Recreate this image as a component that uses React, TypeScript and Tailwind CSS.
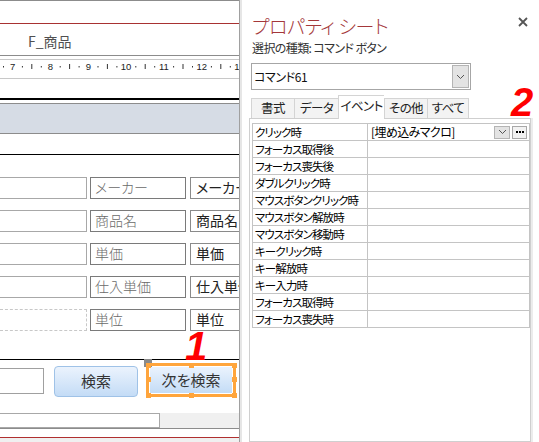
import React from 'react'

const JP = "font-['Noto_Sans_CJK_JP',sans-serif] [font-feature-settings:'palt']"

const ROWS = [
  { label: 'メーカー', dashed: false },
  { label: '商品名', dashed: false },
  { label: '単価', dashed: false },
  { label: '仕入単価', dashed: false },
  { label: '単位', dashed: true },
]

const EVENTS = [
  'クリック時',
  'フォーカス取得後',
  'フォーカス喪失後',
  'ダブルクリック時',
  'マウスボタンクリック時',
  'マウスボタン解放時',
  'マウスボタン移動時',
  'キークリック時',
  'キー解放時',
  'キー入力時',
  'フォーカス取得時',
  'フォーカス喪失時',
]

const TABS = [
  { name: '書式', w: 'w-[43px]' },
  { name: 'データ', w: 'w-[44px]' },
  { name: 'イベント', w: 'w-[46px]', active: true },
  { name: 'その他', w: 'w-[43px]' },
  { name: 'すべて', w: 'w-[42px]' },
]

function Ruler() {
  const units = [6, 7, 8, 9, 10, 11, 12, 13]
  return (
    <svg width="239" height="18" className="block">
      {units.map((n) => {
        const x = 12.7 + (n - 7) * 37.8
        return (
          <g key={n}>
            <text x={x} y="9.5" fontSize="9.5" textAnchor="middle" fill="#222" fontFamily="Liberation Sans, sans-serif">
              {n}
            </text>
            <rect x={x + 9.2} y="6" width="1" height="1.5" fill="#333" />
            <rect x={x + 18.6} y="4" width="1" height="5" fill="#333" />
            <rect x={x + 28.1} y="6" width="1" height="1.5" fill="#333" />
          </g>
        )
      })}
    </svg>
  )
}

function Handle({ className }: { className: string }) {
  return <span className={`absolute h-[5px] w-[5px] bg-[#ffa53c] ${className}`} />
}

function Chevron() {
  return (
    <svg width="9" height="6" viewBox="0 0 9 6">
      <path d="M1 1 L4.5 4.5 L8 1" fill="none" stroke="#555" strokeWidth="1" />
    </svg>
  )
}

function DesignArea() {
  return (
    <div className={`relative flex h-full w-[240px] shrink-0 flex-col overflow-hidden border-r border-[#a0a0a0] bg-white ${JP}`}>
      <div className="h-px bg-[#8c8c8c]" />
      <div className="h-[22px]" />
      <div className="h-px bg-[#a83232]" />
      <div className="h-[31px] pl-[28px] pt-[9px] text-[14px] leading-[16px] text-[#505050]">F_商品</div>
      <div className="h-px bg-[#8c8c8c]" />
      <div className="h-[3px]" />
      <div className="h-[20px] border-y border-[#c8c8c8]">
        <Ruler />
      </div>
      <div className="h-[19px]" />
      <div className="h-[2px] bg-black" />
      <div className="h-[3px]" />
      <div className="h-[31px] border-y border-[#8c8c8c] bg-[#d6dce5]" />
      <div className="h-[20px]" />
      <div className="h-px bg-black" />
      <div className="flex flex-col gap-[11px] pt-[22px]">
        {ROWS.map((r) => (
          <div key={r.label} className="flex h-[22px]">
            <div
              className={`w-[87px] shrink-0 border border-l-0 ${r.dashed ? 'border-dashed border-[#c8c8c8]' : 'border-[#a8a8a8]'}`}
            />
            <div className="ml-[3px] w-[96px] shrink-0 border border-[#7a7a7a] pl-[4px] text-[14px] font-light leading-[18px] text-[#6a6a6a]">
              {r.label}
            </div>
            <div className="ml-[4px] w-[70px] shrink-0 whitespace-nowrap border border-[#8a8a8a] pl-[5px] text-[14px] leading-[18px] text-[#222]">
              {r.label}
            </div>
          </div>
        ))}
      </div>
      <div className="h-[28px]" />
      <div className="h-px bg-black" />
      <div className="relative flex h-[53px] items-start">
        <span className="absolute left-[144px] top-[-1px] h-[8px] w-[8px] bg-[#8a8a8a]" />
        <div className="mt-[8px] h-[26px] w-[44px] shrink-0 border border-l-0 border-[#a0a0a0]" />
        <div className="ml-[10px] mt-[6px] flex h-[31px] w-[84px] shrink-0 items-center justify-center rounded-[4px] border border-[#9fc2e7] bg-gradient-to-b from-[#ebf3fd] to-[#c4dcf6] text-[15px] text-[#333]">
          検索
        </div>
        <div className="relative ml-[8px] mt-[3px] h-[34px] w-[90px] shrink-0 border-[3px] border-[#ffa53c] p-px">
          <div className="flex h-full w-full items-center justify-center bg-gradient-to-b from-[#ebf3fd] to-[#c4dcf6] text-[15px] text-[#333]">
            次を検索
          </div>
          <Handle className="left-[-3px] top-[-3px]" />
          <Handle className="left-[40px] top-[-3px]" />
          <Handle className="right-[-4px] top-[-3px]" />
          <Handle className="left-[-3px] top-[11px]" />
          <Handle className="right-[-4px] top-[11px]" />
          <Handle className="bottom-[-4px] left-[-3px]" />
          <Handle className="bottom-[-4px] left-[40px]" />
          <Handle className="bottom-[-4px] right-[-4px]" />
        </div>
      </div>
      <div className="flex h-[15px] bg-[#f0f0f0]">
        <div className="w-[160px] border border-l-0 border-[#a8a8a8] bg-white" />
      </div>
      <div className="h-px bg-[#8c8c8c]" />
      <div className="h-[8px]" />
      <div className="h-px bg-[#b03030]" />
      <div className="flex-1 bg-[#f0f0f0]" />
      <span className="absolute left-[185px] top-[326px] font-['Liberation_Sans',sans-serif] text-[40px] font-black italic leading-none text-[#ff0000]">
        1
      </span>
    </div>
  )
}

function PropertySheet() {
  return (
    <div className={`relative flex h-full flex-1 flex-col bg-white pl-[2px] ${JP}`}>
      <div className="mt-[13px] flex h-[26px] items-start">
        <span className="pl-[1px] text-[19px] font-light leading-[26px] tracking-[-0.4px] text-[#a4373a]">
          プロパティ シート
        </span>
        <svg width="10" height="10" viewBox="0 0 10 10" className="ml-auto mr-[11px] mt-[4px]">
          <path d="M1 1 L9 9 M9 1 L1 9" stroke="#555" strokeWidth="1.8" />
        </svg>
      </div>
      <div className="mt-[1px] whitespace-nowrap pl-[1px] text-[12px] leading-[16px] tracking-[-0.6px] text-[#333]">
        選択の種類: コマンド ボタン
      </div>
      <div className="mt-[7px] flex h-[27px] w-[220px] items-center border border-[#a6a6a6] pl-[2px] text-[12px] tracking-[-0.4px] text-[#111]">
        <span>コマンド61</span>
        <div className="ml-auto mr-[1px] flex h-[23px] w-[17px] items-center justify-center border border-[#b4b4b4] bg-[#e3e3e3]">
          <Chevron />
        </div>
      </div>
      <div className="relative z-10 mt-[5px] flex h-[23px] items-end">
        {TABS.map((t, i) => (
          <div
            key={t.name}
            className={`${t.w} flex shrink-0 items-center justify-center whitespace-nowrap border-t border-l border-[#d4d4d4] text-[12.5px] tracking-[-0.6px] text-[#222] ${
              t.active ? '-mb-px h-[24px] bg-white pb-[2px]' : 'h-[20px] bg-[#f3f3f3]'
            } ${i === TABS.length - 1 ? 'border-r' : ''}`}
          >
            {t.name}
          </div>
        ))}
      </div>
      <div className="-ml-[2px] flex flex-1">
        <div className="w-[282px] border border-[#cfcfcf] pl-[2px] pt-[4px]">
          <div className="w-[278px] border border-b-0 border-[#c4c4c4]">
            {EVENTS.map((e, i) => (
              <div key={e} className="flex h-[17px] border-b border-[#c4c4c4] text-[11.5px] leading-[16px] tracking-[-0.9px] text-black">
                <div className="w-[115px] shrink-0 whitespace-nowrap border-r border-[#c4c4c4] pl-[2px]">{e}</div>
                {i === 0 ? (
                  <div className="flex flex-1 items-center pl-[3px]">
                    <span className="text-[12px] tracking-[-0.6px]">[埋め込みマクロ]</span>
                    <div className="ml-auto flex h-[13px] w-[16px] items-center justify-center border border-[#b4b4b4] bg-[#e3e3e3]">
                      <Chevron />
                    </div>
                    <div className="ml-[2px] mr-[2px] flex h-[13px] w-[15px] items-center justify-center gap-[1px] border border-[#a8a8a8] bg-[#f2f2f2]">
                      <span className="h-[2px] w-[2px] bg-black" />
                      <span className="h-[2px] w-[2px] bg-black" />
                      <span className="h-[2px] w-[2px] bg-black" />
                    </div>
                  </div>
                ) : (
                  <div className="flex-1" />
                )}
              </div>
            ))}
          </div>
        </div>
        <div className="w-[2px] bg-[#ececec]" />
      </div>
      <span className="absolute left-[262px] top-[82px] font-['Liberation_Sans',sans-serif] text-[40px] font-black italic leading-none text-[#ff0000]">
        2
      </span>
    </div>
  )
}

export default function App() {
  return (
    <div className="flex h-[442px] w-[539px] overflow-hidden bg-white">
      <DesignArea />
      <div className="w-[2px] shrink-0 bg-[#e6e6e6]" />
      <div className="w-[7px] shrink-0" />
      <PropertySheet />
    </div>
  )
}
